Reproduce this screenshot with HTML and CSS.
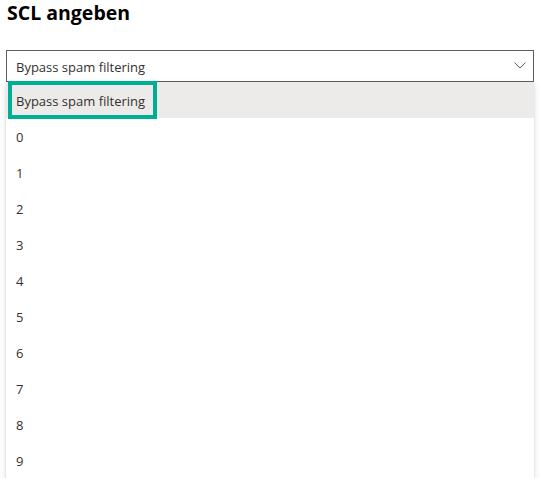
FILE: index.html
```html
<!DOCTYPE html>
<html lang="de">
<head>
<meta charset="utf-8">
<title>SCL angeben</title>
<link rel="stylesheet" href="styles.css">
</head>
<body>
<div class="page">
  <h1 class="title">SCL angeben</h1>
  <div class="field">
    <div class="select">
      <span class="select-text">Bypass spam filtering</span>
      <svg class="chevron" width="12" height="7" viewBox="0 0 12 7" aria-hidden="true">
        <polyline points="0.5,0.5 6,6 11.5,0.5" fill="none" stroke="#605e5c" stroke-width="1"/>
      </svg>
    </div>
    <ul class="list">
      <li class="item selected"><span>Bypass spam filtering</span><span class="mark"></span></li>
      <li class="item">0</li>
      <li class="item">1</li>
      <li class="item">2</li>
      <li class="item">3</li>
      <li class="item">4</li>
      <li class="item">5</li>
      <li class="item">6</li>
      <li class="item">7</li>
      <li class="item">8</li>
      <li class="item">9</li>
    </ul>
  </div>
</div>
</body>
</html>
```
FILE: styles.css
```css
html, body {
  margin: 0;
  padding: 0;
  background: #ffffff;
}
body {
  font-family: "Open Sans", "Noto Sans", "Liberation Sans", sans-serif;
  color: #323130;
}
.page {
  padding: 0 8px 0 6px;
}
.title {
  margin: 0;
  padding-left: 1px;
  font-size: 19.5px;
  font-weight: 700;
  line-height: 26px;
  color: #000000;
}
.field {
  margin-top: 24px;
  width: 528px;
}
.select {
  box-sizing: border-box;
  height: 32px;
  border: 1px solid #605e5c;
  padding: 1px 7px 0 9px;
  display: flex;
  align-items: center;
  justify-content: space-between;
  font-size: 13px;
  color: #323130;
}
.chevron {
  display: block;
  margin-top: -2px;
}
.list {
  list-style: none;
  margin: 0;
  padding: 0;
  background: #ffffff;
  box-shadow: 0 3.2px 7.2px rgba(0, 0, 0, 0.13), 0 0.6px 1.8px rgba(0, 0, 0, 0.11);
}
.item {
  box-sizing: border-box;
  height: 36px;
  display: flex;
  align-items: center;
  padding: 2px 0 0 10px;
  font-size: 13px;
  color: #323130;
}
.item.selected {
  background: #edebe9;
  position: relative;
}
.mark {
  position: absolute;
  left: 2px;
  top: -1px;
  width: 149px;
  height: 38px;
  box-sizing: border-box;
  border: 4px solid #00ae95;
}
```
